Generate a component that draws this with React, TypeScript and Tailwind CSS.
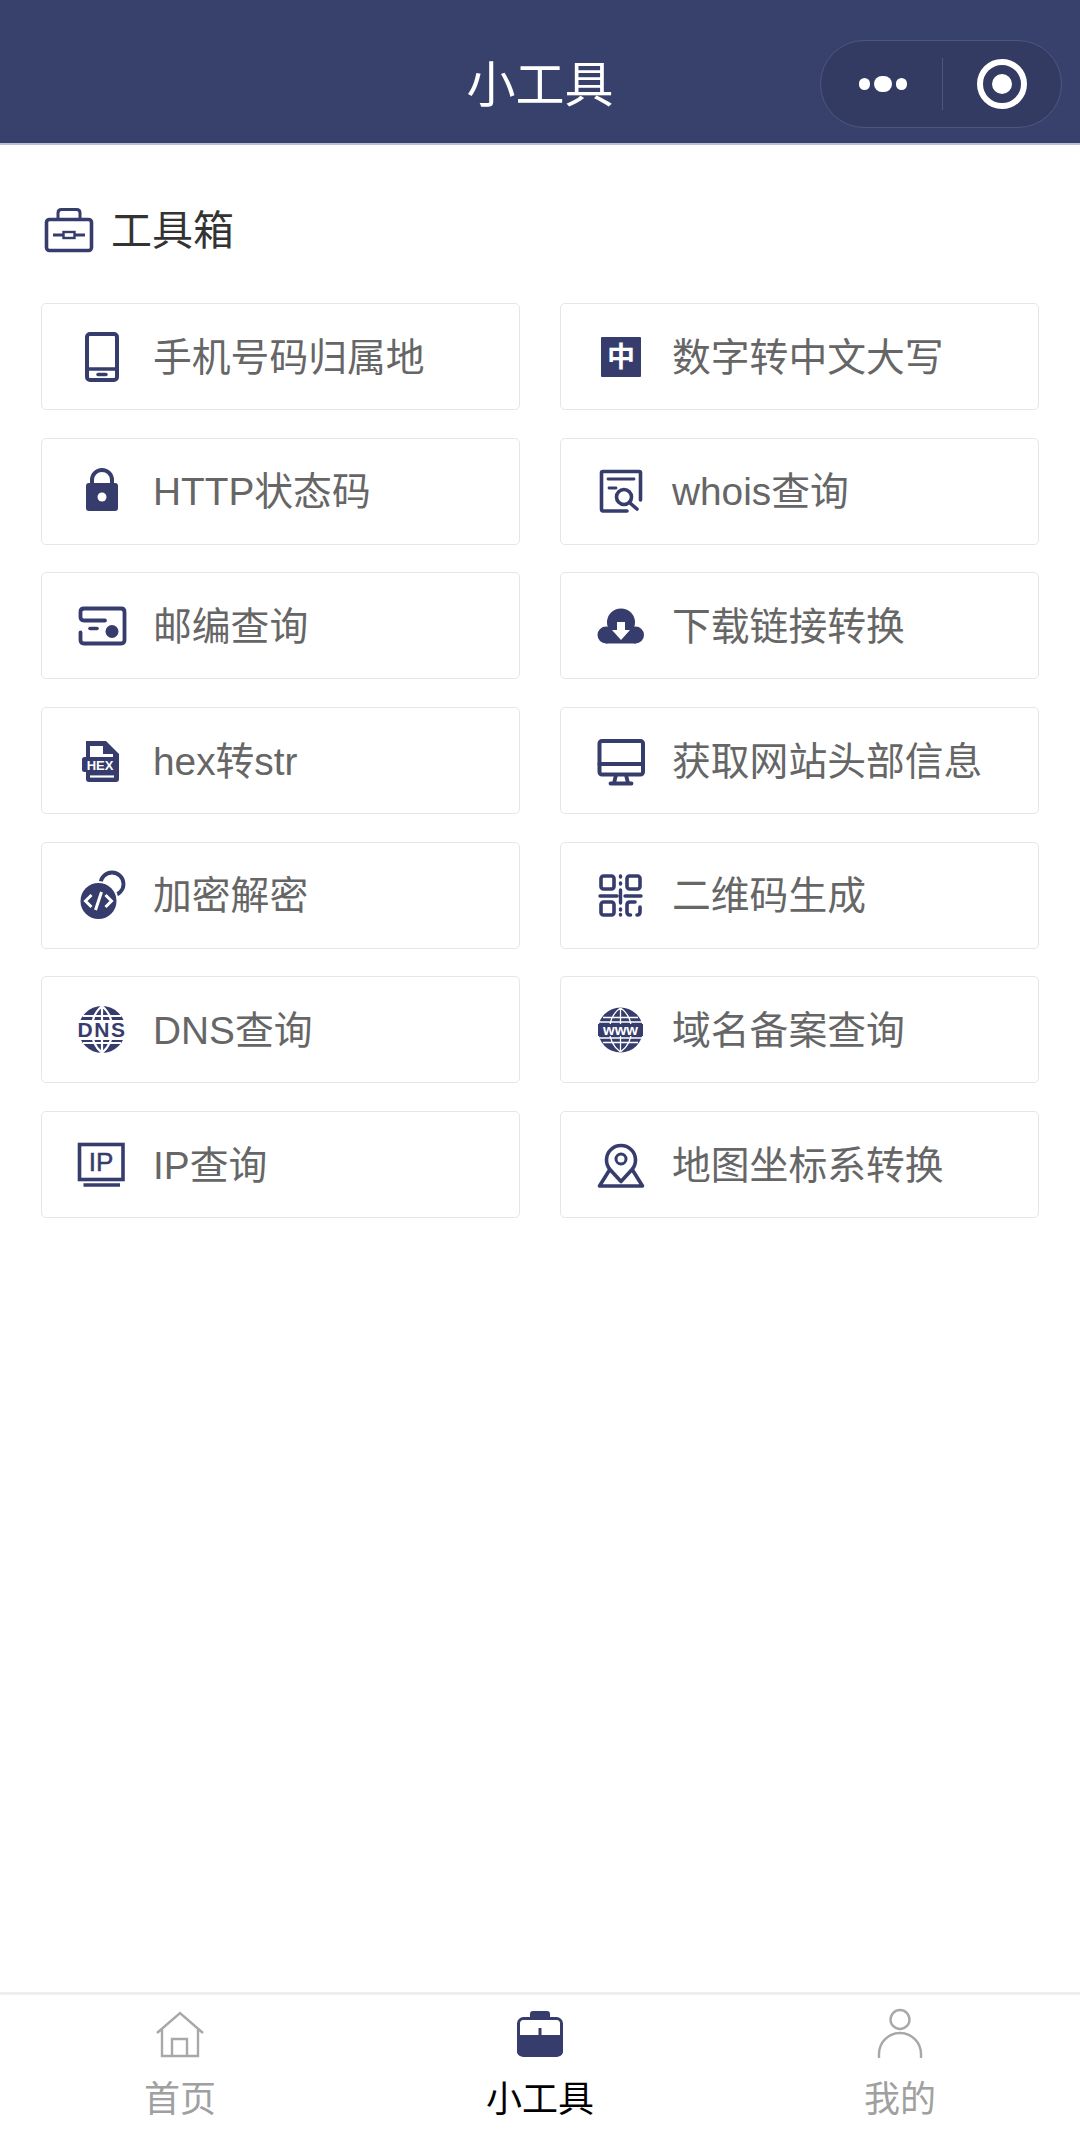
import React from "react";

const D = "#363c6c";
const S = { fill: "none", stroke: D, strokeWidth: 3.6, strokeLinecap: "round", strokeLinejoin: "round" } as const;
const iconFont = "Liberation Sans, Noto Sans CJK SC, sans-serif";

function Svg({ children }: { children: React.ReactNode }) {
  return (
    <svg width="54" height="54" viewBox="0 0 54 54" className="shrink-0">
      {children}
    </svg>
  );
}

const Phone = () => (
  <Svg>
    <rect x="12" y="4" width="30" height="46" rx="3" {...S} strokeWidth={4} />
    <path d="M12 39H42" {...S} />
    <path d="M23 44.5H31" {...S} strokeWidth={3.4} />
  </Svg>
);
const Lock = () => (
  <Svg>
    <path d="M17 22V16A10 10 0 0 1 37 16V22" {...S} strokeWidth={4} />
    <rect x="11" y="19" width="32" height="28" rx="3" fill={D} />
    <circle cx="27" cy="33" r="4.5" fill="#fff" />
  </Svg>
);
const Post = () => (
  <Svg>
    <path d="M30 21.5H9Q5.5 21.5 5.5 18V13Q5.5 9.5 9 9.5H46Q49.5 9.5 49.5 13V41Q49.5 44.5 46 44.5H9Q5.5 44.5 5.5 41V33.5" {...S} strokeWidth={3.8} />
    <path d="M15 29.5H22" {...S} />
    <circle cx="37" cy="32.5" r="6.5" fill={D} />
  </Svg>
);
const Hex = () => (
  <Svg>
    <path d="M11 7H31L44 20V45Q44 48 41 48H14Q11 48 11 45Z" fill={D} />
    <rect x="7" y="23" width="37" height="15" rx="2.5" fill={D} />
    <path d="M15 12H28V20H38V23H15Z" fill="#fff" />
    <path d="M15 42.5H39" stroke="#fff" strokeWidth="2.2" />
    <text x="25" y="36" textAnchor="middle" fontSize="13" fontWeight="700" fill="#fff" fontFamily={iconFont}>HEX</text>
  </Svg>
);
const Crypt = () => (
  <Svg>
    <circle cx="37" cy="16" r="11.5" {...S} strokeWidth={3.8} />
    <circle cx="23.5" cy="33" r="20" fill="#fff" />
    <circle cx="23.5" cy="33" r="18" fill={D} />
    <path d="M16.5 27L10.5 33L16.5 39M30.5 27L36.5 33L30.5 39M26.5 24L20.5 42" fill="none" stroke="#fff" strokeWidth="3" />
  </Svg>
);
const Dns = () => (
  <Svg>
    <circle cx="27" cy="26.5" r="23.5" fill={D} />
    <path d="M27 3V50M27 3C13 15 13 38 27 50M27 3C41 15 41 38 27 50M8 13H46M8 40H46" fill="none" stroke="#fff" strokeWidth="2.2" />
    <rect x="1" y="17" width="52" height="20" fill="#fff" />
    <text x="27" y="34" textAnchor="middle" fontSize="21" fontWeight="700" letterSpacing="1.5" fill={D} fontFamily={iconFont}>DNS</text>
  </Svg>
);
const Ip = () => (
  <Svg>
    <rect x="4.5" y="6.5" width="43.5" height="35" fill="none" stroke={D} strokeWidth="3.6" />
    <path d="M8.5 47H45" fill="none" stroke={D} strokeWidth="3.6" />
    <text x="26" y="33" textAnchor="middle" fontSize="26" stroke={D} strokeWidth="0.5" fill={D} fontFamily={iconFont}>IP</text>
  </Svg>
);
const Zhong = () => (
  <Svg>
    <rect x="7" y="7" width="40" height="40" rx="1" fill={D} />
    <text x="27" y="37" textAnchor="middle" fontSize="28" fontWeight="700" fill="#fff" fontFamily={iconFont}>中</text>
  </Svg>
);
const Whois = () => (
  <Svg>
    <path d="M33 47H9Q7.5 47 7.5 45V9Q7.5 7.5 9 7.5H45Q46.5 7.5 46.5 9V36" {...S} />
    <path d="M14 15H40M15 24H22" {...S} strokeWidth={2.8} />
    <circle cx="30" cy="33" r="7.5" {...S} />
    <path d="M36 39L43 45" {...S} />
  </Svg>
);
const Cloud = () => (
  <Svg>
    <circle cx="27" cy="23.5" r="14" fill={D} />
    <circle cx="12" cy="36" r="8.5" fill={D} />
    <circle cx="41.5" cy="36" r="8.5" fill={D} />
    <rect x="12" y="28" width="30" height="16.5" fill={D} />
    <path d="M23 23H31V31H36L27 41L18 31H23Z" fill="#fff" />
  </Svg>
);
const Monitor = () => (
  <Svg>
    <rect x="5.5" y="7" width="43.5" height="33.5" rx="2.5" {...S} strokeWidth={4} />
    <path d="M5.5 30H49" {...S} strokeWidth={4} />
    <path d="M22 41L20 49M32 41L34 49M16.5 49.5H37.5" {...S} strokeWidth={3.8} />
  </Svg>
);
const Qr = () => (
  <Svg>
    <rect x="7" y="8" width="13" height="13" rx="2.5" {...S} />
    <rect x="33" y="8" width="13" height="13" rx="2.5" {...S} />
    <rect x="7" y="34" width="13" height="13" rx="2.5" {...S} />
    <path d="M6 28H23M31 28H47M26.5 22V35M26.5 8V9M26.5 15V16M26.5 41V42M26.5 46.5V47" fill="none" stroke={D} strokeWidth="3.4" strokeLinecap="round" />
    <path d="M41 34H36Q33 34 33 37V44Q33 47 36 47H36.5M46 39V44Q46 47 43 47" {...S} />
  </Svg>
);
const Www = () => (
  <Svg>
    <circle cx="26.5" cy="27" r="22.5" fill={D} />
    <path d="M26.5 5V49M26.5 5C12 15 12 39 26.5 49M26.5 5C41 15 41 39 26.5 49M9 14.5H44M9 39.5H44M5 19H48M5 35H48" fill="none" stroke="#fff" strokeWidth="1.3" />
    <rect x="4" y="21" width="45" height="12" fill={D} />
    <text x="26.5" y="32" textAnchor="middle" fontSize="15" fontWeight="700" fill="#fff" fontFamily={iconFont}>www</text>
  </Svg>
);
const Pin = () => (
  <Svg>
    <path d="M27 43.5L16 31.5A14.5 14.5 0 1 1 38 31.5Z" {...S} />
    <circle cx="27" cy="21" r="5" {...S} strokeWidth={3} />
    <path d="M15.5 32L5.5 48H48.5L38.5 32" {...S} />
  </Svg>
);

const left: [React.FC, string][] = [
  [Phone, "手机号码归属地"],
  [Lock, "HTTP状态码"],
  [Post, "邮编查询"],
  [Hex, "hex转str"],
  [Crypt, "加密解密"],
  [Dns, "DNS查询"],
  [Ip, "IP查询"],
];
const right: [React.FC, string][] = [
  [Zhong, "数字转中文大写"],
  [Whois, "whois查询"],
  [Cloud, "下载链接转换"],
  [Monitor, "获取网站头部信息"],
  [Qr, "二维码生成"],
  [Www, "域名备案查询"],
  [Pin, "地图坐标系转换"],
];
const items = left.flatMap((l, i) => [l, right[i]]);

export default function App() {
  return (
    <div className="flex h-[2153px] w-[1080px] flex-col bg-white font-['Liberation_Sans','Noto_Sans_CJK_SC',sans-serif]">
      <header className="relative flex h-[145px] shrink-0 items-center justify-center border-b-2 border-[#b9bfd6] bg-[#38416c] pt-[28px]">
        <h1 className="text-[49px] font-normal leading-none text-white">小工具</h1>
        <div className="absolute right-[18px] top-[40px] flex h-[88px] w-[242px] items-center rounded-full border border-[#4f5781] bg-[#333b63]">
          <div className="flex w-[121px] items-center justify-center gap-[4px] pl-[3px]">
            <span className="h-[12px] w-[11px] rounded-full bg-white" />
            <span className="h-[16px] w-[18px] rounded-full bg-white" />
            <span className="h-[12px] w-[11px] rounded-full bg-white" />
          </div>
          <div className="h-[52px] w-px bg-[#4f5781]" />
          <div className="flex flex-1 items-center justify-center">
            <div className="flex h-[50px] w-[50px] items-center justify-center rounded-full border-[6px] border-white">
              <div className="h-[20px] w-[20px] rounded-full bg-white" />
            </div>
          </div>
        </div>
      </header>

      <main className="flex-1 px-[41px] pt-[60px]">
        <div className="mb-[48px] flex h-[50px] items-center pl-[3px]">
          <svg width="50" height="46" viewBox="0 0 50 46" className="shrink-0">
            <rect x="2.5" y="12.5" width="45" height="31" rx="3" fill="none" stroke={D} strokeWidth="3.6" />
            <path d="M14 12V6Q14 2.5 17.5 2.5H32.5Q36 2.5 36 6V12" fill="none" stroke={D} strokeWidth="3" />
            <path d="M9 28H19M31 28H41" stroke={D} strokeWidth="3" />
            <rect x="19.5" y="25" width="11" height="6" fill="none" stroke={D} strokeWidth="2.4" />
          </svg>
          <span className="ml-[17px] mt-[2px] text-[41px] leading-none text-[#333]">工具箱</span>
        </div>
        <div className="grid grid-cols-2 gap-x-[40px] gap-y-[27.7px]">
          {items.map(([Icon, label]) => (
            <div key={label} className="flex h-[107px] items-center rounded-[5px] border border-[#e6e6e6] pl-[33px]">
              <Icon />
              <span className="ml-[24px] mt-[3px] text-[38.8px] leading-none text-[#666]">{label}</span>
            </div>
          ))}
        </div>
      </main>

      <footer className="flex h-[161px] shrink-0 border-t-[3px] border-[#eeeeee] bg-white pt-[12px]">
        <div className="flex flex-1 flex-col items-center">
          <svg width="54" height="54" viewBox="0 0 54 54">
            <path d="M4 26L27 6L50 26M9 22V49H45V22M19 49V32H34V49" fill="none" stroke="#a8a8a8" strokeWidth="2.4" />
          </svg>
          <span className="mt-[19px] text-[36px] leading-[40px] text-[#a0a0a0]">首页</span>
        </div>
        <div className="flex flex-1 flex-col items-center">
          <svg width="54" height="54" viewBox="0 0 54 54">
            <path d="M17 12V7Q17 4 20 4H34Q37 4 37 7V12Z" fill={D} />
            <rect x="5.5" y="11.5" width="43" height="37" rx="5" fill="#fff" stroke={D} strokeWidth="3" />
            <path d="M4 28H50V44Q50 49 45 49H9Q4 49 4 44Z" fill={D} />
            <path d="M27 21V31" stroke={D} strokeWidth="3" />
          </svg>
          <span className="mt-[19px] text-[36px] leading-[40px] text-black">小工具</span>
        </div>
        <div className="flex flex-1 flex-col items-center">
          <svg width="54" height="54" viewBox="0 0 54 54">
            <circle cx="27" cy="12.5" r="9.5" fill="none" stroke="#a8a8a8" strokeWidth="2.4" />
            <path d="M6 51V47A21 21 0 0 1 48 47V51" fill="none" stroke="#a8a8a8" strokeWidth="2.4" />
          </svg>
          <span className="mt-[19px] text-[36px] leading-[40px] text-[#a0a0a0]">我的</span>
        </div>
      </footer>
    </div>
  );
}
